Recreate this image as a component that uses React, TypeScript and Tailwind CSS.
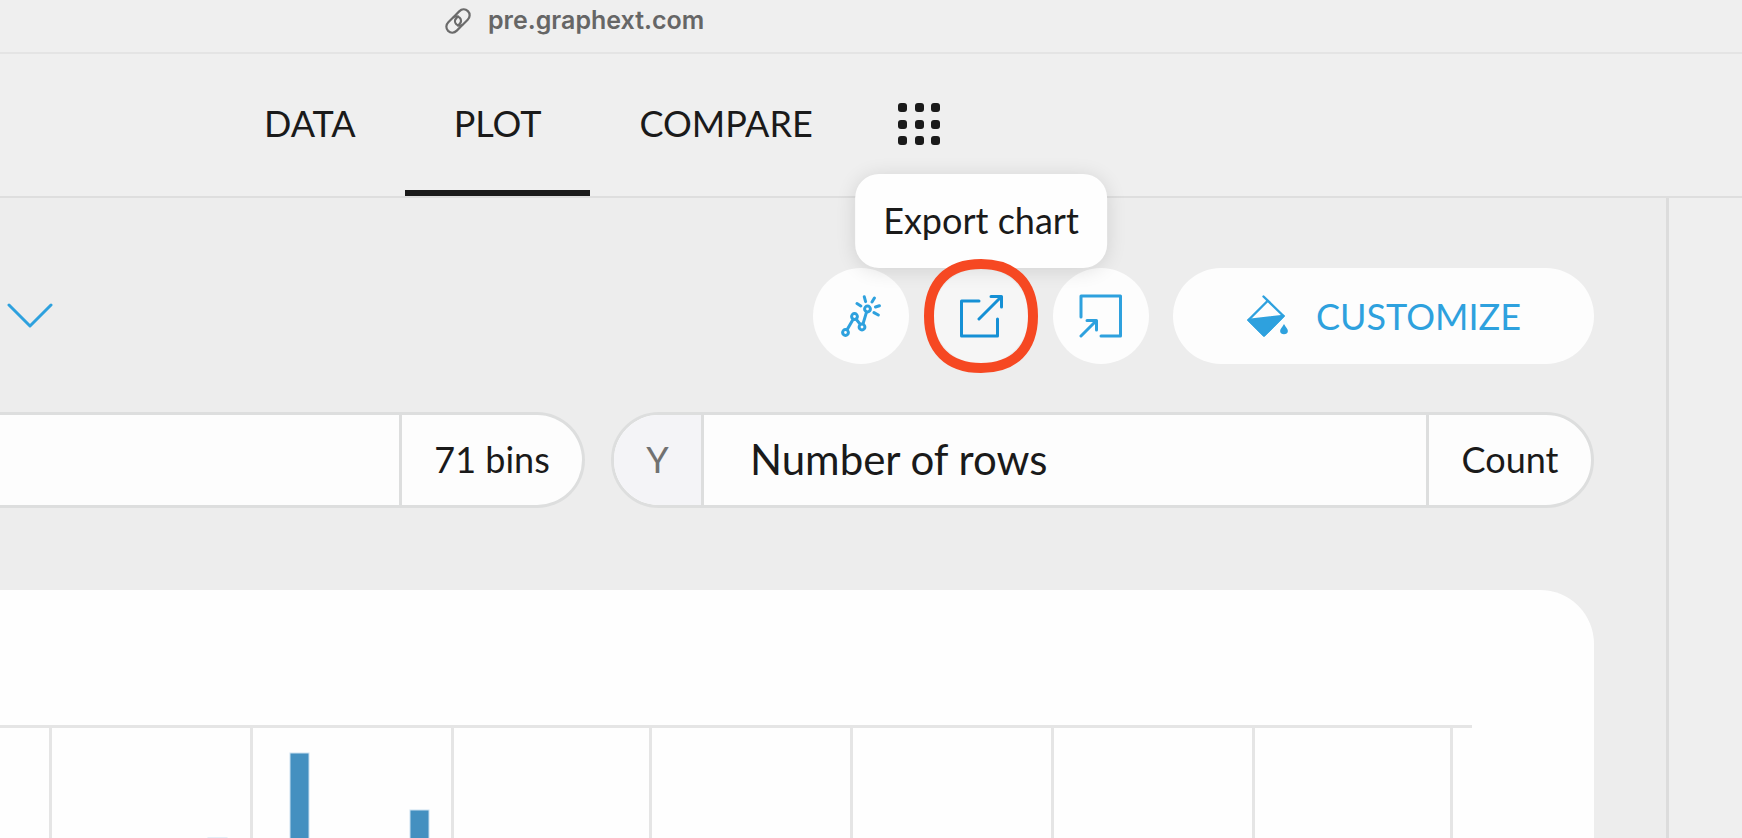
import type { ReactNode } from "react";

const GRID_LINES = [50, 251, 452, 650, 851, 1052, 1253, 1451];

const BARS = [
  { x: 208, y: 248 },
  { x: 290, y: 163 },
  { x: 410, y: 220 },
];

function Tab({ label, active = false }: { label: string; active?: boolean }) {
  return (
    <a
      href={"#" + label.toLowerCase()}
      aria-current={active ? "page" : undefined}
      className={
        active
          ? "flex items-center border-b-6 border-[#1a1a1a] px-[49px] pt-0.5"
          : "flex items-center border-b-6 border-transparent px-[49px] pt-0.5"
      }
    >
      {label}
    </a>
  );
}

function RoundButton({ label, children }: { label: string; children: ReactNode }) {
  return (
    <button
      type="button"
      aria-label={label}
      className="flex size-24 items-center justify-center rounded-full bg-[#fdfdfd] text-[#2ea1de]"
    >
      {children}
    </button>
  );
}

function LinkIcon() {
  return (
    <svg viewBox="0 0 26 26" className="size-[26px]" fill="none" stroke="#6b6b6b" strokeWidth="2.2" strokeLinecap="round">
      <path d="M8.4 9.2 L14.2 3.4 C16.8 0.9 20.4 0.8 22.9 3.1 C25.3 5.5 25.2 9.2 22.7 11.7 L18.2 16.2 C16.2 18.1 13.2 18 11.3 16.2 C9.5 14.4 9.6 11.8 11.3 10.1 L13 8.5" />
      <path d="M17.6 16.8 L11.8 22.6 C9.2 25.1 5.6 25.2 3.1 22.9 C0.7 20.5 0.8 16.8 3.3 14.3 L7.8 9.8 C9.8 7.9 12.8 8 14.7 9.8 C16.5 11.6 16.4 14.2 14.7 15.9 L13 17.5" />
    </svg>
  );
}

function AppsIcon() {
  const steps = [0, 17, 33];
  return (
    <svg viewBox="0 0 42 42" className="size-[42px]" fill="#1a1a1a">
      {steps.map((y) => steps.map((x) => <rect key={x + "-" + y} x={x} y={y} width="9" height="9" rx="3" />))}
    </svg>
  );
}

function InsightIcon() {
  return (
    <svg viewBox="0 0 40 42" className="h-[42px] w-10" fill="none" stroke="currentColor" strokeWidth="3" strokeLinecap="round">
      <circle cx="4.5" cy="37.5" r="2.9" />
      <circle cx="13.5" cy="21.5" r="2.9" />
      <circle cx="21" cy="32" r="2.9" />
      <circle cx="26.5" cy="14" r="2.9" />
      <path d="M6.2 34.6 L12 24.4 M15.2 24.2 L19.3 29.4 M22 28.9 L25.5 17.1" />
      <path d="M24.6 6.6 L23.3 1.8 M31 7 L33.4 3 M34.5 12 L38.4 10.8 M33 17.6 L37.3 20 M19.8 11 L16 8.6" />
    </svg>
  );
}

function ExportIcon() {
  return (
    <svg viewBox="0 0 44 44" className="size-11" fill="none" stroke="currentColor" strokeWidth="3" strokeLinecap="round" strokeLinejoin="round">
      <path d="M20 7 H2.5 V42 H38.5 V25" />
      <path d="M20 25 L42 3 M32 2.5 H42.5 V13" />
    </svg>
  );
}

function ImportIcon() {
  return (
    <svg viewBox="0 0 44 44" className="size-11" fill="none" stroke="currentColor" strokeWidth="3" strokeLinecap="round" strokeLinejoin="round">
      <path d="M2 23 V2 H41.5 V42 H22" />
      <path d="M2 42 L17 27 M8 26.5 H17.5 V36" />
    </svg>
  );
}

function PaintIcon() {
  return (
    <svg viewBox="0 0 42 42" className="size-[42px]" fill="none" stroke="currentColor" strokeWidth="2.4" strokeLinecap="round" strokeLinejoin="round">
      <path d="M17.5 1.5 L37.5 21 L18 40.5 L2.5 25 L21.5 6" />
      <path d="M2.5 25 L37.5 21 L18 40.5 Z" fill="currentColor" />
      <path d="M38 29 C39.8 32.2 41.9 34 41.9 36 C41.9 40.4 34.1 40.4 34.1 36 C34.1 34 36.2 32.2 38 29 Z" fill="currentColor" stroke="none" />
    </svg>
  );
}

export default function App() {
  return (
    <div className="flex h-screen flex-col overflow-hidden bg-[#efefef] font-['Lato',sans-serif] text-4xl text-[#1a1a1a]">
      <div className="flex h-[54px] shrink-0 items-center gap-[17px] border-b-2 border-[#e4e4e4] pb-2.5 pl-[445px] font-['Inter',sans-serif] text-[25px] font-semibold text-[#666666]">
        <LinkIcon />
        <span>pre.graphext.com</span>
      </div>

      <nav className="flex h-36 shrink-0 border-b-2 border-[#dedede] pl-[215px]">
        <Tab label="DATA" />
        <Tab label="PLOT" active />
        <Tab label="COMPARE" />
        <button type="button" aria-label="Apps" className="flex items-center px-9 pb-0.5">
          <AppsIcon />
        </button>
      </nav>

      <div className="flex min-h-0 grow">
        <main className="flex min-w-0 grow flex-col border-r-3 border-[#dcdcdc] bg-[#ededed] pt-[70px] pr-[72px]">
          <div className="flex items-center gap-6">
            <button type="button" aria-label="Expand" className="mr-auto pl-1.5">
              <svg viewBox="0 0 48 26" className="h-[26px] w-12" fill="none" stroke="#2ea1de" strokeWidth="3" strokeLinecap="round" strokeLinejoin="round">
                <path d="M3 2 L24 23 L45 2" />
              </svg>
            </button>
            <RoundButton label="Insights">
              <InsightIcon />
            </RoundButton>
            <div className="relative z-10">
              <button
                type="button"
                aria-describedby="export-tip"
                aria-label="Export"
                className="flex size-24 items-center justify-center rounded-full bg-[#f6f6f6] text-[#1590d5]"
              >
                <ExportIcon />
              </button>
              <div
                id="export-tip"
                role="tooltip"
                className="absolute bottom-full left-1/2 -translate-x-1/2 rounded-3xl bg-[#fefefe] px-7 pt-[22px] pb-6 leading-[48px] whitespace-nowrap shadow-[0_2px_20px_rgba(0,0,0,0.12)]"
              >
                Export chart
              </div>
              <svg viewBox="0 0 114 114" className="pointer-events-none absolute -top-[9px] -left-[9px] size-[114px]" fill="none" stroke="#f64822" strokeWidth="10">
                <path d="M57 5 C90 5 109 24 109 57 C109 90 90 109 57 109 C24 109 5 90 5 57 C5 24 24 5 57 5 Z" />
              </svg>
            </div>
            <RoundButton label="Import">
              <ImportIcon />
            </RoundButton>
            <button
              type="button"
              className="flex h-24 w-[421px] items-center justify-center gap-7 rounded-full bg-[#fdfdfd] text-[#2ea1de]"
            >
              <PaintIcon />
              CUSTOMIZE
            </button>
          </div>

          <div className="mt-12 flex gap-[26px]">
            <div className="flex h-24 w-[585px] shrink-0 overflow-hidden rounded-r-full border-3 border-l-0 border-[#dddede] bg-[#fdfdfd]">
              <button type="button" aria-label="X axis column" className="grow" />
              <button type="button" className="w-[183px] border-l-3 border-[#dddede] pb-0.5">
                71 bins
              </button>
            </div>
            <div className="flex h-24 grow overflow-hidden rounded-full border-3 border-[#dddede] bg-[#fdfdfd]">
              <span className="flex w-[90px] items-center justify-center border-r-3 border-[#dddede] bg-[#f4f4f7] pb-0.5 text-[#717171]">Y</span>
              <button type="button" className="grow pb-0.5 pl-[46px] text-left text-[42px]">
                Number of rows
              </button>
              <button type="button" className="w-[165px] border-l-3 border-[#dddede] pb-0.5">
                Count
              </button>
            </div>
          </div>

          <section className="mt-[82px] min-h-0 grow overflow-hidden rounded-tr-[54px] bg-[#fefefe]">
            <svg viewBox="0 0 1594 248" className="w-full" role="img" aria-label="Histogram">
              <g fill="#e5e5e5">
                {GRID_LINES.map((x) => (
                  <rect key={x} x={x - 1} y="135" width="3" height="113" />
                ))}
                <rect x="0" y="135" width="1472" height="3" />
              </g>
              {BARS.map((bar) => (
                <rect key={bar.x} x={bar.x} y={bar.y} width="19" height="120" fill="#4490c0" stroke="#c9dff0" strokeWidth="1" />
              ))}
            </svg>
          </section>
        </main>
        <aside className="w-[73px] shrink-0" />
      </div>
    </div>
  );
}
